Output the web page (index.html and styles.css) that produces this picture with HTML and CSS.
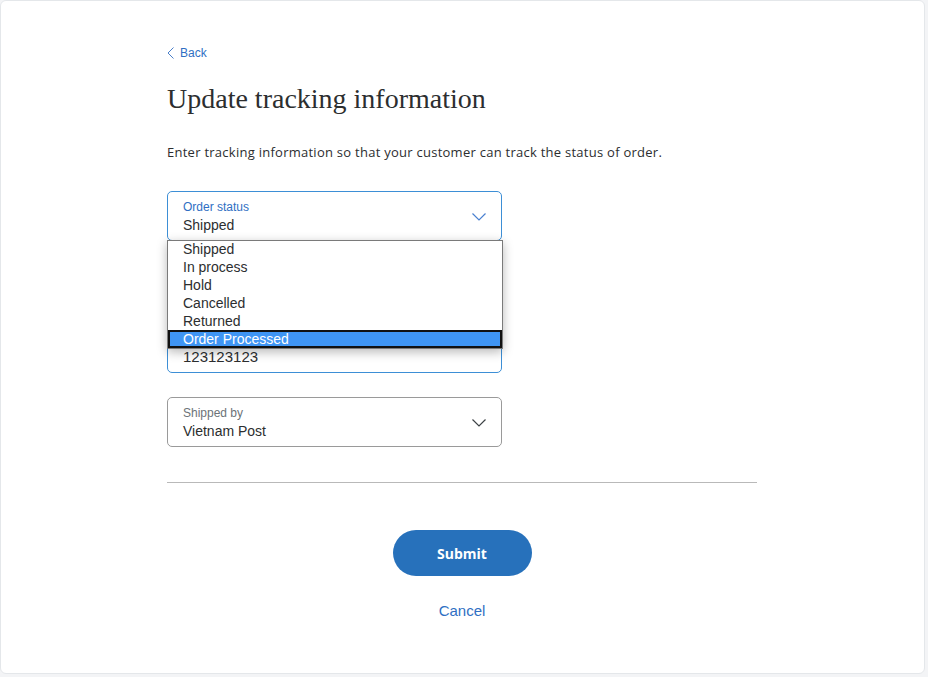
FILE: index.html
```html
<!DOCTYPE html>
<html lang="en">
<head>
<meta charset="utf-8">
<title>Update tracking information</title>
<link rel="stylesheet" href="styles.css">
</head>
<body>
<main class="card">
  <div class="column">
    <a class="back" href="#">
      <svg class="back-icon" width="8" height="12" viewBox="0 0 8 12"><path d="M6.5 0.5 L1 6 L6.5 11.5" fill="none" stroke="currentColor" stroke-width="1"/></svg>
      Back
    </a>
    <h1 class="title">Update tracking information</h1>
    <p class="intro">Enter tracking information so that your customer can track the status of order.</p>

    <div class="fields">
      <div class="field-wrap">
        <div class="field field-active">
          <span class="field-label label-blue">Order status</span>
          <span class="field-value">Shipped</span>
          <svg class="chevron chevron-blue" width="14" height="8" viewBox="0 0 14 8"><path d="M0.5 0.5 L7 7 L13.5 0.5" fill="none" stroke="currentColor" stroke-width="1.2"/></svg>
        </div>
        <ul class="listbox">
          <li class="option">Shipped</li>
          <li class="option">In process</li>
          <li class="option">Hold</li>
          <li class="option">Cancelled</li>
          <li class="option">Returned</li>
          <li class="option option-selected">Order Processed</li>
        </ul>
      </div>

      <div class="field field-active field-tracking">
        <span class="field-label label-blue">Tracking number</span>
        <span class="field-value value-input">123123123</span>
      </div>

      <div class="field">
        <span class="field-label label-grey">Shipped by</span>
        <span class="field-value">Vietnam Post</span>
        <svg class="chevron chevron-dark" width="14" height="8" viewBox="0 0 14 8"><path d="M0.5 0.5 L7 7 L13.5 0.5" fill="none" stroke="currentColor" stroke-width="1.2"/></svg>
      </div>
    </div>

    <hr class="divider">

    <div class="actions">
      <button class="submit" type="button">Submit</button>
      <a class="cancel" href="#">Cancel</a>
    </div>
  </div>
</main>
</body>
</html>
```

FILE: styles.css
```css
* { box-sizing: border-box; }

html, body {
  margin: 0;
  padding: 0;
  background: #f3f4f6;
}

body {
  width: 928px;
  height: 677px;
  overflow: hidden;
  font-family: "Liberation Sans", Arial, sans-serif;
  color: #2c2e2f;
}

.card {
  width: 925px;
  height: 674px;
  background: #ffffff;
  border: 1px solid #e4e7ea;
  border-radius: 6px;
  padding-top: 44px;
}

.column {
  width: 590px;
  margin-left: 166px;
}

.back {
  display: inline-flex;
  align-items: center;
  gap: 5px;
  color: #2f6fc3;
  font-size: 12px;
  text-decoration: none;
  line-height: 16px;
}

.back-icon { color: #4a7fc9; }

.title {
  margin: 18px 0 0;
  font-family: "Liberation Serif", "Times New Roman", serif;
  font-weight: 400;
  font-size: 28px;
  line-height: 36px;
  color: #2c2e2f;
}

.intro {
  margin: 26px 0 0;
  font-family: "Open Sans", sans-serif;
  font-size: 13px;
  letter-spacing: 0.26px;
  line-height: 18px;
  color: #2c2e2f;
}

.fields {
  margin-top: 30px;
  width: 335px;
  display: flex;
  flex-direction: column;
}

.field-wrap {
  position: relative;
}

.field {
  position: relative;
  height: 50px;
  border: 1px solid #9a9a9a;
  border-radius: 5px;
  padding: 8px 15px 0;
  display: flex;
  flex-direction: column;
  background: #fff;
}

.field-active {
  border-color: #3d8fd6;
}

.field-tracking {
  margin-top: 82px;
}

.field-tracking + .field {
  margin-top: 24px;
}

.field-label {
  font-size: 12px;
  line-height: 14px;
}

.label-blue { color: #2f6fc3; }
.label-grey { color: #6c7378; }

.field-value {
  font-size: 14px;
  line-height: 18px;
  margin-top: 2px;
  color: #2c2e2f;
}

.value-input {
  font-size: 15px;
}

.chevron {
  position: absolute;
  right: 15px;
  top: 21px;
}

.chevron-blue { color: #4a80d0; }
.chevron-dark { color: #3d4246; }

.listbox {
  position: absolute;
  left: 0;
  top: 49px;
  z-index: 5;
  width: 336px;
  margin: 0;
  padding: 0;
  list-style: none;
  background: #fff;
  border: 1px solid #7a7a7a;
  box-shadow: 0 3px 10px rgba(0, 0, 0, 0.28);
}

.option {
  height: 18px;
  padding-left: 15px;
  font-size: 14px;
  color: #2c2e2f;
  border: 2px solid transparent;
  border-left: 0;
  border-right: 0;
  line-height: 14px;
}

.option:first-child {
  border-top-width: 1px;
  height: 17px;
}

.option-selected {
  background: #3f95f4;
  color: #fff;
  border: 2px solid #111;
  padding-left: 13px;
}

.divider {
  margin: 35px 0 0;
  border: 0;
  border-top: 1px solid #b9b9b9;
  height: 0;
}

.actions {
  display: flex;
  flex-direction: column;
  align-items: center;
  margin-top: 47px;
}

.submit {
  width: 139px;
  height: 46px;
  border: 0;
  border-radius: 23px;
  background: #2771bb;
  color: #fff;
  font-family: "Open Sans", sans-serif;
  font-weight: 700;
  font-size: 14px;
  cursor: pointer;
}

.cancel {
  margin-top: 26px;
  font-size: 15px;
  color: #2f6fc3;
  text-decoration: none;
  line-height: 18px;
}
```
